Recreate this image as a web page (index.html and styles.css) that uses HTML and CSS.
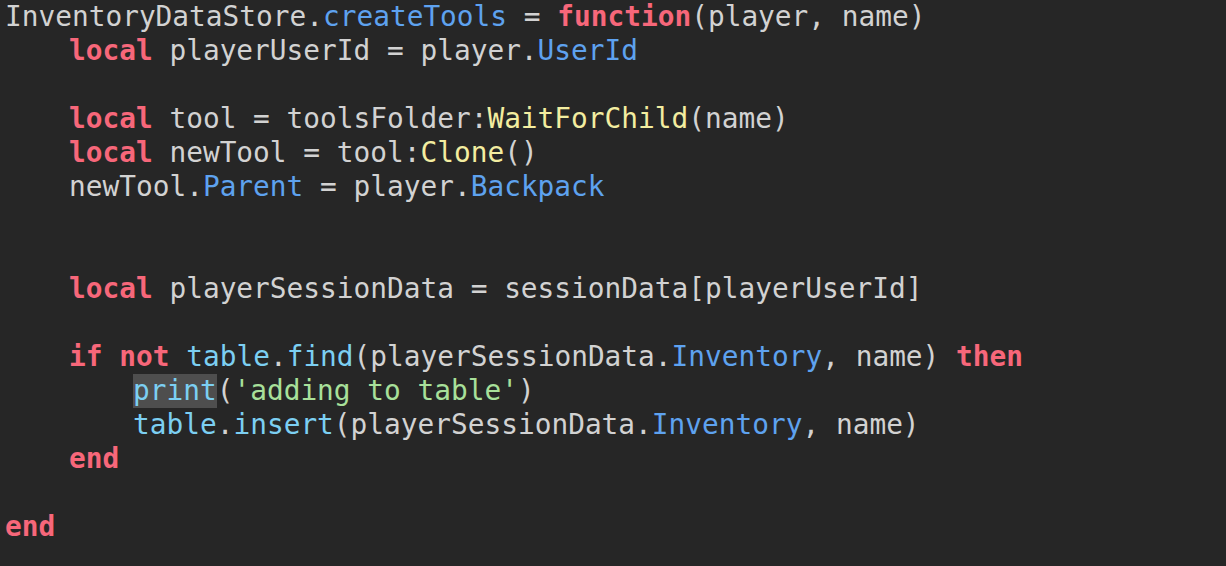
FILE: index.html
```html
<!DOCTYPE html>
<html>
<head>
<meta charset="utf-8">
<link rel="stylesheet" href="styles.css">
</head>
<body>
<div class="editor">
<div class="line">InventoryDataStore.<span class="prop">createTools</span> = <span class="kw">function</span>(player, name)</div>
<div class="line i1"><span class="kw">local</span> playerUserId = player.<span class="prop">UserId</span></div>
<div class="line"></div>
<div class="line i1"><span class="kw">local</span> tool = toolsFolder:<span class="fn">WaitForChild</span>(name)</div>
<div class="line i1"><span class="kw">local</span> newTool = tool:<span class="fn">Clone</span>()</div>
<div class="line i1">newTool.<span class="prop">Parent</span> = player.<span class="prop">Backpack</span></div>
<div class="line"></div>
<div class="line"></div>
<div class="line i1"><span class="kw">local</span> playerSessionData = sessionData[playerUserId]</div>
<div class="line"></div>
<div class="line i1"><span class="kw">if</span> <span class="kw">not</span> <span class="lib">table</span>.<span class="lib">find</span>(playerSessionData.<span class="prop">Inventory</span>, name) <span class="kw">then</span></div>
<div class="line i2"><span class="lib sel">print</span>(<span class="str">'adding to table'</span>)</div>
<div class="line i2"><span class="lib">table</span>.<span class="lib">insert</span>(playerSessionData.<span class="prop">Inventory</span>, name)</div>
<div class="line i1"><span class="kw">end</span></div>
<div class="line"></div>
<div class="line"><span class="kw">end</span></div>
<div class="line"></div>
</div>
</body>
</html>
```
FILE: styles.css
```css
html, body {
  margin: 0;
  padding: 0;
  background: #262626;
}
.editor {
  width: 1226px;
  height: 566px;
  overflow: hidden;
  background: #262626;
  color: #d2d2d2;
  font-family: "DejaVu Sans Mono", "Liberation Mono", monospace;
  font-size: 27.8px;
  padding-left: 5px;
  box-sizing: border-box;
}
.line {
  height: 34px;
  line-height: 34px;
  white-space: pre;
}
.i1 { padding-left: 64px; }
.i2 { padding-left: 128px; }
.kw { color: #f7677a; font-weight: bold; }
.prop { color: #5ea2ef; }
.fn { color: #f3eda0; }
.lib { color: #7ccff2; }
.str { color: #a8e09a; }
.sel {
  background: #4e4e4e;
  display: inline-block;
  height: 34px;
}
```
